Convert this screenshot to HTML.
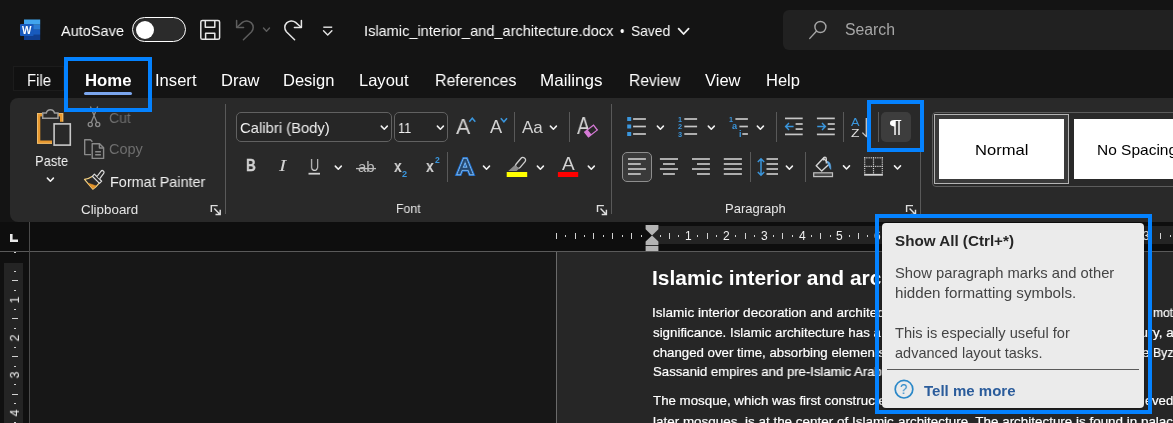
<!DOCTYPE html>
<html lang="en">
<head>
<meta charset="utf-8">
<title>Islamic_interior_and_architecture.docx - Word</title>
<style>
html,body{margin:0;padding:0;background:#141414;}
body{width:1173px;height:423px;overflow:hidden;position:relative;background:#141414;font-family:"Liberation Sans",sans-serif;}
.abs{position:absolute;}
.t{will-change:transform;position:absolute;white-space:pre;line-height:20px;transform-origin:0 50%;font-family:"Liberation Sans",sans-serif;}
#ribbon{left:10px;top:98px;width:1180px;height:124px;background:#292929;border-radius:8px 0 0 8px;}
#rulerband{left:0;top:222px;width:1173px;height:29px;background:#0e0e0e;}
#docbg{left:30px;top:252px;width:1143px;height:171px;background:#171717;}
#leftstrip{left:0;top:252px;width:29px;height:171px;background:#101010;}
#page{left:556px;top:252px;width:617px;height:171px;background:#262626;border-left:1px solid #6a6a6a;box-sizing:border-box;}
.hl{position:absolute;border:4px solid #0482ff;box-sizing:border-box;z-index:7;}
.sep{position:absolute;width:1px;background:#595959;}
.combo{position:absolute;box-sizing:border-box;border:1px solid #616161;border-radius:5px;background:#262626;}
svg{position:absolute;left:0;top:0;overflow:visible;}
</style>
</head>
<body>
<!-- backgrounds -->
<div class="abs" id="searchbox" style="left:783px;top:10px;width:400px;height:40px;background:#212121;border-radius:6px;"></div>
<div class="abs" id="ribbon"></div>
<div class="abs" id="rulerband"></div>
<div class="abs" id="leftstrip"></div>
<div class="abs" id="docbg"></div>
<div class="abs" id="page"></div>
<div class="abs" style="left:0;top:251px;width:1173px;height:1px;background:#5a5a5a;"></div>
<div class="abs" style="left:29px;top:222px;width:1px;height:201px;background:#4a4a4a;"></div>
<!-- ruler light areas -->
<div class="abs" style="left:652px;top:226px;width:521px;height:18px;background:#242424;"></div>
<div class="abs" style="left:4px;top:263px;width:19px;height:160px;background:#242424;"></div>

<div class="abs" style="left:13px;top:66px;width:51px;height:25px;box-sizing:border-box;background:#111111;border:1px solid #1c1c1c;"></div>
<!-- toggle -->
<div class="abs" style="left:132px;top:17px;width:54px;height:25px;box-sizing:border-box;border:1.8px solid #ffffff;border-radius:13px;background:#2b2b2b;"></div>
<div class="abs" style="left:136.3px;top:20.8px;width:18px;height:18px;border-radius:50%;background:#ffffff;"></div>
<!-- home underline -->
<div class="abs" style="left:84px;top:92px;width:48px;height:3px;border-radius:2px;background:#7ba6ee;"></div>

<!-- ribbon controls -->
<div class="sep" style="left:225px;top:104px;height:110px;"></div>
<div class="sep" style="left:611px;top:104px;height:110px;"></div>
<div class="sep" style="left:920px;top:104px;height:110px;"></div>
<div class="combo" style="left:236px;top:112px;width:156px;height:30px;"></div>
<div class="combo" style="left:394px;top:112px;width:54px;height:30px;"></div>
<div class="sep" style="left:514px;top:112px;height:30px;"></div>
<div class="sep" style="left:569px;top:112px;height:30px;"></div>
<div class="sep" style="left:447px;top:152px;height:30px;"></div>
<div class="sep" style="left:776px;top:112px;height:30px;"></div>
<div class="sep" style="left:843px;top:112px;height:30px;"></div>
<div class="sep" style="left:878px;top:112px;height:30px;"></div>
<div class="sep" style="left:750px;top:152px;height:30px;"></div>
<div class="sep" style="left:805px;top:152px;height:30px;"></div>
<div class="abs" style="left:881px;top:112px;width:30px;height:30px;border-radius:5px;background:#3d3d3d;"></div>
<div class="abs" style="left:622px;top:152px;width:30px;height:30px;box-sizing:border-box;border:1px solid #8e8e8e;border-radius:5px;background:#3a3a3a;"></div>
<!-- styles gallery -->
<div class="abs" style="left:932px;top:112px;width:260px;height:75px;box-sizing:border-box;border:1px solid #5c5c5c;border-radius:4px;"></div>
<div class="abs" style="left:934px;top:114px;width:135px;height:69.5px;box-sizing:border-box;border:1px solid #b4b4b4;background:#3a3a3a;"></div>
<div class="abs" style="left:939px;top:119px;width:125px;height:60px;background:#ffffff;"></div>
<div class="abs" style="left:1074px;top:119px;width:125px;height:60px;background:#ffffff;"></div>

<svg width="1173" height="423" viewBox="0 0 1173 423" style="z-index:2;" aria-hidden="true">
<g id="word-logo">
<rect x="24" y="19.5" width="16.2" height="5.2" fill="#41a5ee"/>
<rect x="24" y="24.7" width="16.2" height="5.1" fill="#2b7cd3"/>
<rect x="24" y="29.8" width="16.2" height="5.1" fill="#185abd"/>
<rect x="24" y="34.9" width="16.2" height="5.1" fill="#103f91"/>
<rect x="20" y="24" width="13.6" height="12" rx="1" fill="#185abd"/>
<text x="26.8" y="33.7" font-family="Liberation Sans, sans-serif" font-weight="700" font-size="10" fill="#ffffff" text-anchor="middle">W</text>
</g>
<g id="save" fill="none" stroke="#e6e6e6" stroke-width="1.5" stroke-linejoin="round">
<rect x="200.8" y="20.4" width="18.8" height="18.9" rx="1.6"/>
<path d="M205.3 20.4 V27.2 H214.8 V20.4"/>
<path d="M205.6 39.3 V33.3 H214.8 V39.3"/>
</g>
<g id="undo" fill="none" stroke="#5e5e5e" stroke-width="1.5" stroke-linecap="round" stroke-linejoin="round">
<path d="M236.6 20.5 V27.5 H243.6"/><path d="M237 27.2 L242.4 22.4 A6.6 6.6 0 0 1 251.6 31.8 L243.4 39.8"/>
</g>
<polyline points="263.50,28.00 266.50,31.20 269.50,28.00" fill="none" stroke="#5e5e5e" stroke-width="1.4" stroke-linecap="round" stroke-linejoin="round"/>
<g id="redo" fill="none" stroke="#e6e6e6" stroke-width="1.5" stroke-linecap="round" stroke-linejoin="round">
<path d="M301.4 20.5 V27.5 H294.4"/><path d="M301 27.2 L295.6 22.4 A6.6 6.6 0 0 0 286.4 31.8 L294.6 39.8"/>
</g>
<line x1="323.30" y1="27.20" x2="332.20" y2="27.20" stroke="#e6e6e6" stroke-width="1.4" stroke-linecap="butt"/>
<polyline points="323.50,30.70 327.70,34.90 331.90,30.70" fill="none" stroke="#e6e6e6" stroke-width="1.4" stroke-linecap="round" stroke-linejoin="round"/>
<polyline points="678.60,28.60 683.60,34.00 688.60,28.60" fill="none" stroke="#f0f0f0" stroke-width="1.8" stroke-linecap="round" stroke-linejoin="round"/>
<circle cx="820.4" cy="27" r="5.5" fill="none" stroke="#a6a6a6" stroke-width="1.4"/>
<line x1="816.40" y1="31.20" x2="809.80" y2="38.40" stroke="#a6a6a6" stroke-width="1.4" stroke-linecap="round"/>
<g id="paste">
<rect x="38.7" y="114.8" width="22.9" height="27.3" fill="none" stroke="#e8982e" stroke-width="3.2"/>
<rect x="37.5" y="113.5" width="25.3" height="29.8" fill="none" stroke="#f3c373" stroke-width="0.9"/>
<path d="M42.7 118.2 V113 H46.3 A4.2 4.2 0 0 1 54.5 113 H58 V118.2 Z" fill="#292929" stroke="#9c9c9c" stroke-width="1.5"/>
<rect x="52" y="121.8" width="20.5" height="25.5" fill="#292929"/>
<rect x="54.1" y="123.9" width="16.2" height="21.2" fill="#292929" stroke="#c8c8c8" stroke-width="1.6"/>
</g>
<polyline points="47.40,178.15 50.40,181.25 53.40,178.15" fill="none" stroke="#f0f0f0" stroke-width="1.55" stroke-linecap="round" stroke-linejoin="round"/>
<g id="cut" fill="none" stroke="#8a8a8a" stroke-width="1.3">
<path d="M90.4 106.6 L96.9 122.4 M97.7 106.6 L91.2 122.4"/><circle cx="90.3" cy="124.5" r="2.1"/><circle cx="97.7" cy="124.5" r="2.1"/>
</g>
<g id="copy" fill="none" stroke="#8a8a8a" stroke-width="1.4" stroke-linejoin="round">
<path d="M91 154.6 H84.7 V139.8 H90.5 L92.4 141.7"/>
<path d="M92.2 143.8 H99.6 L103.6 147.8 V158.4 H92.2 Z"/><path d="M99.4 144 V148 H103.4"/>
<path d="M95.2 151.8 H100.9 M95.2 154.7 H100.9"/>
</g>
<g id="fpainter" fill="none" stroke-linejoin="round">
<path d="M92.6 176.2 Q88.6 178.8 84.5 179.4 L92.8 189.2 Q96.8 186.6 99.2 183.2" stroke="#f3cf80" stroke-width="1.2"/>
<path d="M88.3 183.3 Q92 184.4 96 185.9 L92.9 188.5 Z" fill="#e8962a" stroke="#e8962a" stroke-width="0.6"/>
<path d="M94.4 174.1 L101.7 181.2 L99.5 183.4 L92.3 176.3 Z" fill="#292929" stroke="#dcdcdc" stroke-width="1.2"/>
<path d="M97 176.5 L100.9 171.3 A1.75 1.75 0 0 1 103.7 173.4 L99.6 178.9" fill="#292929" stroke="#dcdcdc" stroke-width="1.2"/>
</g>
<path d="M211.30 212.00 V205.60 H217.70 M214.30 208.60 L220.10 214.40 M220.20 209.80 V214.50 H215.50" fill="none" stroke="#dedede" stroke-width="1.45"/>
<path d="M597.50 212.00 V205.60 H603.90 M600.50 208.60 L606.30 214.40 M606.40 209.80 V214.50 H601.70" fill="none" stroke="#dedede" stroke-width="1.45"/>
<path d="M906.60 212.00 V205.60 H913.00 M909.60 208.60 L915.40 214.40 M915.50 209.80 V214.50 H910.80" fill="none" stroke="#dedede" stroke-width="1.45"/>
<polyline points="381.30,126.15 384.30,129.25 387.30,126.15" fill="none" stroke="#f0f0f0" stroke-width="1.55" stroke-linecap="round" stroke-linejoin="round"/>
<polyline points="437.40,126.15 440.40,129.25 443.40,126.15" fill="none" stroke="#f0f0f0" stroke-width="1.55" stroke-linecap="round" stroke-linejoin="round"/>
<polyline points="469.3,121.8 472.3,118.2 475.3,121.8" fill="none" stroke="#3a96dd" stroke-width="1.5"/>
<polyline points="500.8,118.2 503.9,121.8 507,118.2" fill="none" stroke="#3a96dd" stroke-width="1.5"/>
<polyline points="550.40,126.15 553.40,129.25 556.40,126.15" fill="none" stroke="#f0f0f0" stroke-width="1.55" stroke-linecap="round" stroke-linejoin="round"/>
<g transform="translate(591,131) rotate(-38)"><rect x="-5.6" y="-3.1" width="11.2" height="6.2" fill="#292929" stroke="#d67ad6" stroke-width="1.3"/><rect x="-5.6" y="-3.1" width="3.8" height="6.2" fill="#d67ad6"/></g>
<rect x="308.5" y="172.8" width="11.5" height="1.8" fill="#d0d0d0"/>
<polyline points="335.30,166.15 338.30,169.25 341.30,166.15" fill="none" stroke="#f0f0f0" stroke-width="1.55" stroke-linecap="round" stroke-linejoin="round"/>
<line x1="356.00" y1="168.60" x2="376.00" y2="168.60" stroke="#bcbcbc" stroke-width="1.3" stroke-linecap="butt"/>
<g id="texteffects" font-family="Liberation Sans, sans-serif" font-size="22" text-anchor="middle" stroke-linejoin="miter" stroke-miterlimit="3">
<text x="465" y="174" fill="#1b67c3" stroke="#1b67c3" stroke-width="4.2">A</text>
<text x="465" y="174" fill="#7db9f1" stroke="#7db9f1" stroke-width="2.3">A</text>
<text x="465" y="174" fill="#24476e" stroke="#24476e" stroke-width="0.5">A</text>
</g>
<polyline points="483.50,166.15 486.50,169.25 489.50,166.15" fill="none" stroke="#f0f0f0" stroke-width="1.55" stroke-linecap="round" stroke-linejoin="round"/>
<g id="highlighter">
<g transform="translate(520.6,162.8) rotate(-50)"><rect x="-6.2" y="-2.6" width="12.4" height="5.2" rx="2.4" fill="none" stroke="#d0d0d0" stroke-width="1.3"/></g>
<path d="M514.9 164.9 L519.2 168.5 L516.6 170.9 L508.3 170.9 Z" fill="#8c8c8c"/>
</g>
<rect x="506.7" y="172" width="20.5" height="5" fill="#ffff00"/>
<polyline points="537.40,166.15 540.40,169.25 543.40,166.15" fill="none" stroke="#f0f0f0" stroke-width="1.55" stroke-linecap="round" stroke-linejoin="round"/>
<rect x="557.9" y="172" width="20.3" height="5" fill="#ff0000"/>
<polyline points="588.30,166.15 591.30,169.25 594.30,166.15" fill="none" stroke="#f0f0f0" stroke-width="1.55" stroke-linecap="round" stroke-linejoin="round"/>
<rect x="627.2" y="117.0" width="4" height="4" fill="#3a96dd"/>
<line x1="633.10" y1="119.00" x2="645.90" y2="119.00" stroke="#c6c6c6" stroke-width="1.7" stroke-linecap="butt"/>
<line x1="684.30" y1="119.00" x2="697.10" y2="119.00" stroke="#c6c6c6" stroke-width="1.7" stroke-linecap="butt"/>
<rect x="627.2" y="124.5" width="4" height="4" fill="#3a96dd"/>
<line x1="633.10" y1="126.50" x2="645.90" y2="126.50" stroke="#c6c6c6" stroke-width="1.7" stroke-linecap="butt"/>
<line x1="684.30" y1="126.50" x2="697.10" y2="126.50" stroke="#c6c6c6" stroke-width="1.7" stroke-linecap="butt"/>
<rect x="627.2" y="132.0" width="4" height="4" fill="#3a96dd"/>
<line x1="633.10" y1="134.00" x2="645.90" y2="134.00" stroke="#c6c6c6" stroke-width="1.7" stroke-linecap="butt"/>
<line x1="684.30" y1="134.00" x2="697.10" y2="134.00" stroke="#c6c6c6" stroke-width="1.7" stroke-linecap="butt"/>
<polyline points="657.40,126.15 660.40,129.25 663.40,126.15" fill="none" stroke="#f0f0f0" stroke-width="1.55" stroke-linecap="round" stroke-linejoin="round"/>
<polyline points="708.30,126.15 711.30,129.25 714.30,126.15" fill="none" stroke="#f0f0f0" stroke-width="1.55" stroke-linecap="round" stroke-linejoin="round"/>
<line x1="735.40" y1="119.00" x2="747.90" y2="119.00" stroke="#c6c6c6" stroke-width="1.7" stroke-linecap="butt"/>
<line x1="739.40" y1="126.50" x2="747.90" y2="126.50" stroke="#c6c6c6" stroke-width="1.7" stroke-linecap="butt"/>
<line x1="742.30" y1="134.00" x2="747.90" y2="134.00" stroke="#c6c6c6" stroke-width="1.7" stroke-linecap="butt"/>
<polyline points="757.40,126.15 760.40,129.25 763.40,126.15" fill="none" stroke="#f0f0f0" stroke-width="1.55" stroke-linecap="round" stroke-linejoin="round"/>
<line x1="785.00" y1="118.40" x2="802.70" y2="118.40" stroke="#c6c6c6" stroke-width="1.7" stroke-linecap="butt"/>
<line x1="795.60" y1="124.00" x2="802.70" y2="124.00" stroke="#c6c6c6" stroke-width="1.7" stroke-linecap="butt"/>
<line x1="795.60" y1="129.10" x2="802.70" y2="129.10" stroke="#c6c6c6" stroke-width="1.7" stroke-linecap="butt"/>
<line x1="785.00" y1="134.40" x2="802.70" y2="134.40" stroke="#c6c6c6" stroke-width="1.7" stroke-linecap="butt"/>
<line x1="816.90" y1="118.40" x2="834.80" y2="118.40" stroke="#c6c6c6" stroke-width="1.7" stroke-linecap="butt"/>
<line x1="827.70" y1="124.00" x2="834.80" y2="124.00" stroke="#c6c6c6" stroke-width="1.7" stroke-linecap="butt"/>
<line x1="827.70" y1="129.10" x2="834.80" y2="129.10" stroke="#c6c6c6" stroke-width="1.7" stroke-linecap="butt"/>
<line x1="816.90" y1="134.40" x2="834.80" y2="134.40" stroke="#c6c6c6" stroke-width="1.7" stroke-linecap="butt"/>
<path d="M793.6 126.5 H785.6 M789 123.1 L785.6 126.5 L789 129.9" fill="none" stroke="#3a96dd" stroke-width="1.4"/>
<path d="M817.2 126.5 H825.4 M822 123.1 L825.4 126.5 L822 129.9" fill="none" stroke="#3a96dd" stroke-width="1.4"/>
<path d="M866.3 118 V136.6 M862.4 132.6 L866.3 136.6 L870.2 132.6" fill="none" stroke="#c6c6c6" stroke-width="1.3"/>
<line x1="628.00" y1="159.00" x2="645.90" y2="159.00" stroke="#c6c6c6" stroke-width="1.7" stroke-linecap="butt"/>
<line x1="659.90" y1="159.00" x2="678.00" y2="159.00" stroke="#c6c6c6" stroke-width="1.7" stroke-linecap="butt"/>
<line x1="692.00" y1="159.00" x2="709.90" y2="159.00" stroke="#c6c6c6" stroke-width="1.7" stroke-linecap="butt"/>
<line x1="723.80" y1="159.00" x2="741.90" y2="159.00" stroke="#c6c6c6" stroke-width="1.7" stroke-linecap="butt"/>
<line x1="766.50" y1="159.00" x2="778.00" y2="159.00" stroke="#c6c6c6" stroke-width="1.7" stroke-linecap="butt"/>
<line x1="628.00" y1="164.00" x2="640.80" y2="164.00" stroke="#c6c6c6" stroke-width="1.7" stroke-linecap="butt"/>
<line x1="663.00" y1="164.00" x2="674.90" y2="164.00" stroke="#c6c6c6" stroke-width="1.7" stroke-linecap="butt"/>
<line x1="697.00" y1="164.00" x2="709.90" y2="164.00" stroke="#c6c6c6" stroke-width="1.7" stroke-linecap="butt"/>
<line x1="723.80" y1="164.00" x2="741.90" y2="164.00" stroke="#c6c6c6" stroke-width="1.7" stroke-linecap="butt"/>
<line x1="766.50" y1="164.00" x2="778.00" y2="164.00" stroke="#c6c6c6" stroke-width="1.7" stroke-linecap="butt"/>
<line x1="628.00" y1="169.00" x2="645.90" y2="169.00" stroke="#c6c6c6" stroke-width="1.7" stroke-linecap="butt"/>
<line x1="659.90" y1="169.00" x2="678.00" y2="169.00" stroke="#c6c6c6" stroke-width="1.7" stroke-linecap="butt"/>
<line x1="692.00" y1="169.00" x2="709.90" y2="169.00" stroke="#c6c6c6" stroke-width="1.7" stroke-linecap="butt"/>
<line x1="723.80" y1="169.00" x2="741.90" y2="169.00" stroke="#c6c6c6" stroke-width="1.7" stroke-linecap="butt"/>
<line x1="766.50" y1="169.00" x2="778.00" y2="169.00" stroke="#c6c6c6" stroke-width="1.7" stroke-linecap="butt"/>
<line x1="628.00" y1="174.00" x2="640.80" y2="174.00" stroke="#c6c6c6" stroke-width="1.7" stroke-linecap="butt"/>
<line x1="663.00" y1="174.00" x2="674.90" y2="174.00" stroke="#c6c6c6" stroke-width="1.7" stroke-linecap="butt"/>
<line x1="697.00" y1="174.00" x2="709.90" y2="174.00" stroke="#c6c6c6" stroke-width="1.7" stroke-linecap="butt"/>
<line x1="723.80" y1="174.00" x2="741.90" y2="174.00" stroke="#c6c6c6" stroke-width="1.7" stroke-linecap="butt"/>
<line x1="766.50" y1="174.00" x2="778.00" y2="174.00" stroke="#c6c6c6" stroke-width="1.7" stroke-linecap="butt"/>
<path d="M761 158.8 V175.2 M757.8 162 L761 158.8 L764.2 162 M757.8 172 L761 175.2 L764.2 172" fill="none" stroke="#3a96dd" stroke-width="1.5"/>
<polyline points="786.40,166.15 789.40,169.25 792.40,166.15" fill="none" stroke="#f0f0f0" stroke-width="1.55" stroke-linecap="round" stroke-linejoin="round"/>
<g id="shading">
<path d="M816.2 165.8 L823.3 158.2 L829.3 164.1 L821.7 170.9 Z" fill="none" stroke="#d4d4d4" stroke-width="1.4" stroke-linejoin="round"/>
<path d="M823.4 160.6 V158.7 A1.45 1.45 0 0 1 826.3 158.7 V163.6" fill="none" stroke="#d4d4d4" stroke-width="1.3"/>
<path d="M827.2 161.4 C829.8 161.6 831 164 830.8 169.4 C829.2 168 828.6 164.4 827.2 161.4 Z" fill="#5aa8e8" stroke="#5aa8e8" stroke-width="0.6"/>
<rect x="813.7" y="172.8" width="18.8" height="3.8" fill="#4a4a4a" stroke="#c0c0c0" stroke-width="1.2"/>
</g>
<polyline points="843.50,165.85 846.50,168.95 849.50,165.85" fill="none" stroke="#f0f0f0" stroke-width="1.55" stroke-linecap="round" stroke-linejoin="round"/>
<g id="borders" fill="#d2d2d2">
<rect x="864.10" y="157.20" width="1.2" height="1.2"/>
<rect x="864.10" y="165.80" width="1.2" height="1.2"/>
<rect x="866.30" y="157.20" width="1.2" height="1.2"/>
<rect x="866.30" y="165.80" width="1.2" height="1.2"/>
<rect x="868.50" y="157.20" width="1.2" height="1.2"/>
<rect x="868.50" y="165.80" width="1.2" height="1.2"/>
<rect x="870.70" y="157.20" width="1.2" height="1.2"/>
<rect x="870.70" y="165.80" width="1.2" height="1.2"/>
<rect x="872.90" y="157.20" width="1.2" height="1.2"/>
<rect x="872.90" y="165.80" width="1.2" height="1.2"/>
<rect x="875.10" y="157.20" width="1.2" height="1.2"/>
<rect x="875.10" y="165.80" width="1.2" height="1.2"/>
<rect x="877.30" y="157.20" width="1.2" height="1.2"/>
<rect x="877.30" y="165.80" width="1.2" height="1.2"/>
<rect x="879.50" y="157.20" width="1.2" height="1.2"/>
<rect x="879.50" y="165.80" width="1.2" height="1.2"/>
<rect x="881.70" y="157.20" width="1.2" height="1.2"/>
<rect x="881.70" y="165.80" width="1.2" height="1.2"/>
<rect x="864.10" y="157.20" width="1.2" height="1.2"/>
<rect x="872.90" y="157.20" width="1.2" height="1.2"/>
<rect x="881.70" y="157.20" width="1.2" height="1.2"/>
<rect x="864.10" y="159.35" width="1.2" height="1.2"/>
<rect x="872.90" y="159.35" width="1.2" height="1.2"/>
<rect x="881.70" y="159.35" width="1.2" height="1.2"/>
<rect x="864.10" y="161.50" width="1.2" height="1.2"/>
<rect x="872.90" y="161.50" width="1.2" height="1.2"/>
<rect x="881.70" y="161.50" width="1.2" height="1.2"/>
<rect x="864.10" y="163.65" width="1.2" height="1.2"/>
<rect x="872.90" y="163.65" width="1.2" height="1.2"/>
<rect x="881.70" y="163.65" width="1.2" height="1.2"/>
<rect x="864.10" y="165.80" width="1.2" height="1.2"/>
<rect x="872.90" y="165.80" width="1.2" height="1.2"/>
<rect x="881.70" y="165.80" width="1.2" height="1.2"/>
<rect x="864.10" y="167.95" width="1.2" height="1.2"/>
<rect x="872.90" y="167.95" width="1.2" height="1.2"/>
<rect x="881.70" y="167.95" width="1.2" height="1.2"/>
<rect x="864.10" y="170.10" width="1.2" height="1.2"/>
<rect x="872.90" y="170.10" width="1.2" height="1.2"/>
<rect x="881.70" y="170.10" width="1.2" height="1.2"/>
<rect x="864.10" y="172.25" width="1.2" height="1.2"/>
<rect x="872.90" y="172.25" width="1.2" height="1.2"/>
<rect x="881.70" y="172.25" width="1.2" height="1.2"/>
<rect x="864.1" y="173.9" width="18.8" height="1.8"/>
</g>
<polyline points="894.50,165.85 897.50,168.95 900.50,165.85" fill="none" stroke="#f0f0f0" stroke-width="1.55" stroke-linecap="round" stroke-linejoin="round"/>
<rect x="641" y="235" width="1" height="2" fill="#d2d2d2"/>
<rect x="631" y="233" width="1" height="6" fill="#d2d2d2"/>
<rect x="622" y="235" width="1" height="2" fill="#d2d2d2"/>
<rect x="612" y="233" width="1" height="6" fill="#d2d2d2"/>
<rect x="603" y="235" width="1" height="2" fill="#d2d2d2"/>
<rect x="593" y="233" width="1" height="6" fill="#d2d2d2"/>
<rect x="584" y="235" width="1" height="2" fill="#d2d2d2"/>
<rect x="575" y="233" width="1" height="6" fill="#d2d2d2"/>
<rect x="565" y="235" width="1" height="2" fill="#d2d2d2"/>
<rect x="556" y="233" width="1" height="6" fill="#d2d2d2"/>
<rect x="660" y="235" width="1" height="2" fill="#d2d2d2"/>
<rect x="669" y="233" width="1" height="6" fill="#d2d2d2"/>
<rect x="678" y="235" width="1" height="2" fill="#d2d2d2"/>
<rect x="697" y="235" width="1" height="2" fill="#d2d2d2"/>
<rect x="707" y="233" width="1" height="6" fill="#d2d2d2"/>
<rect x="716" y="235" width="1" height="2" fill="#d2d2d2"/>
<rect x="735" y="235" width="1" height="2" fill="#d2d2d2"/>
<rect x="745" y="233" width="1" height="6" fill="#d2d2d2"/>
<rect x="754" y="235" width="1" height="2" fill="#d2d2d2"/>
<rect x="773" y="235" width="1" height="2" fill="#d2d2d2"/>
<rect x="782" y="233" width="1" height="6" fill="#d2d2d2"/>
<rect x="792" y="235" width="1" height="2" fill="#d2d2d2"/>
<rect x="811" y="235" width="1" height="2" fill="#d2d2d2"/>
<rect x="820" y="233" width="1" height="6" fill="#d2d2d2"/>
<rect x="830" y="235" width="1" height="2" fill="#d2d2d2"/>
<rect x="849" y="235" width="1" height="2" fill="#d2d2d2"/>
<rect x="858" y="233" width="1" height="6" fill="#d2d2d2"/>
<rect x="867" y="235" width="1" height="2" fill="#d2d2d2"/>
<rect x="886" y="235" width="1" height="2" fill="#d2d2d2"/>
<rect x="896" y="233" width="1" height="6" fill="#d2d2d2"/>
<rect x="905" y="235" width="1" height="2" fill="#d2d2d2"/>
<rect x="924" y="235" width="1" height="2" fill="#d2d2d2"/>
<rect x="934" y="233" width="1" height="6" fill="#d2d2d2"/>
<rect x="943" y="235" width="1" height="2" fill="#d2d2d2"/>
<rect x="962" y="235" width="1" height="2" fill="#d2d2d2"/>
<rect x="971" y="233" width="1" height="6" fill="#d2d2d2"/>
<rect x="981" y="235" width="1" height="2" fill="#d2d2d2"/>
<rect x="1000" y="235" width="1" height="2" fill="#d2d2d2"/>
<rect x="1009" y="233" width="1" height="6" fill="#d2d2d2"/>
<rect x="1019" y="235" width="1" height="2" fill="#d2d2d2"/>
<rect x="1038" y="235" width="1" height="2" fill="#d2d2d2"/>
<rect x="1047" y="233" width="1" height="6" fill="#d2d2d2"/>
<rect x="1056" y="235" width="1" height="2" fill="#d2d2d2"/>
<rect x="1075" y="235" width="1" height="2" fill="#d2d2d2"/>
<rect x="1085" y="233" width="1" height="6" fill="#d2d2d2"/>
<rect x="1094" y="235" width="1" height="2" fill="#d2d2d2"/>
<rect x="1113" y="235" width="1" height="2" fill="#d2d2d2"/>
<rect x="1123" y="233" width="1" height="6" fill="#d2d2d2"/>
<rect x="1132" y="235" width="1" height="2" fill="#d2d2d2"/>
<rect x="1151" y="235" width="1" height="2" fill="#d2d2d2"/>
<rect x="1160" y="233" width="1" height="6" fill="#d2d2d2"/>
<rect x="1170" y="235" width="1" height="2" fill="#d2d2d2"/>
<g id="indent" fill="#b4b4b4">
<path d="M645.6 225 H658.4 V229.2 L652 235.4 L645.6 229.2 Z"/>
<path d="M645.6 245 V241.6 L652 235.6 L658.4 241.6 V245 Z"/>
<rect x="645.6" y="245.8" width="12.8" height="5.2"/>
</g>
<path d="M10 234 H12.6 V239.4 H18 V242 H10 Z" fill="#e8e8e8"/>
<rect x="14" y="252" width="2" height="1" fill="#d2d2d2"/>
<rect x="14" y="271" width="2" height="1" fill="#d2d2d2"/>
<rect x="12" y="280" width="6" height="1" fill="#d2d2d2"/>
<rect x="14" y="290" width="2" height="1" fill="#d2d2d2"/>
<rect x="14" y="309" width="2" height="1" fill="#d2d2d2"/>
<rect x="12" y="318" width="6" height="1" fill="#d2d2d2"/>
<rect x="14" y="328" width="2" height="1" fill="#d2d2d2"/>
<rect x="14" y="347" width="2" height="1" fill="#d2d2d2"/>
<rect x="12" y="356" width="6" height="1" fill="#d2d2d2"/>
<rect x="14" y="366" width="2" height="1" fill="#d2d2d2"/>
<rect x="14" y="384" width="2" height="1" fill="#d2d2d2"/>
<rect x="12" y="394" width="6" height="1" fill="#d2d2d2"/>
<rect x="14" y="403" width="2" height="1" fill="#d2d2d2"/>
<rect x="14" y="422" width="2" height="1" fill="#d2d2d2"/>
</svg>

<!-- highlight boxes -->
<div class="hl" style="left:64px;top:57px;width:88px;height:55px;"></div>
<div class="hl" style="left:867px;top:100px;width:57px;height:52px;"></div>
<div class="hl" style="left:875px;top:214px;width:277px;height:200px;"></div>
<!-- tooltip -->
<div class="abs" id="tooltip" style="left:882px;top:223px;width:262px;height:184.5px;background:#ebebeb;border-radius:4px;box-shadow:0 1px 4px rgba(0,0,0,.5);z-index:5;"></div>
<div class="abs" style="left:887px;top:369px;width:252px;height:1px;background:#5a5a5a;z-index:6;"></div>
<svg width="1173" height="423" style="z-index:6;" aria-hidden="true">
 <circle cx="904" cy="389.2" r="8.8" fill="none" stroke="#2b88c8" stroke-width="1.7"/>
</svg>

<span class="t" style="left:61.00px;top:20.60px;font-size:15px;color:#ffffff;transform:scaleX(0.9685);">AutoSave</span>
<span class="t" style="left:363.60px;top:20.60px;font-size:15px;color:#ffffff;transform:scaleX(0.9712);">Islamic_interior_and_architecture.docx</span>
<span class="t" style="left:619.60px;top:20.60px;font-size:15px;color:#ffffff;transform:scaleX(0.8356);">•</span>
<span class="t" style="left:631.20px;top:20.60px;font-size:15px;color:#ffffff;transform:scaleX(0.9213);">Saved</span>
<span class="t" style="left:844.50px;top:20.33px;font-size:15.8px;color:#a6a6a6;transform:scaleX(0.9988);">Search</span>
<span class="t" style="left:27.00px;top:70.08px;font-size:16.5px;color:#ffffff;transform:scaleX(0.9025);">File</span>
<span class="t" style="left:84.50px;top:70.08px;font-size:16.5px;color:#ffffff;transform:scaleX(1.0143);font-weight:700;">Home</span>
<span class="t" style="left:154.50px;top:70.08px;font-size:16.5px;color:#ffffff;transform:scaleX(1.0053);">Insert</span>
<span class="t" style="left:220.70px;top:70.08px;font-size:16.5px;color:#ffffff;transform:scaleX(0.9944);">Draw</span>
<span class="t" style="left:283.40px;top:70.08px;font-size:16.5px;color:#ffffff;transform:scaleX(0.9927);">Design</span>
<span class="t" style="left:358.50px;top:70.08px;font-size:16.5px;color:#ffffff;transform:scaleX(1.0011);">Layout</span>
<span class="t" style="left:434.60px;top:70.08px;font-size:16.5px;color:#ffffff;transform:scaleX(0.9634);">References</span>
<span class="t" style="left:540.30px;top:70.08px;font-size:16.5px;color:#ffffff;transform:scaleX(1.0309);">Mailings</span>
<span class="t" style="left:628.90px;top:70.08px;font-size:16.5px;color:#ffffff;transform:scaleX(0.9462);">Review</span>
<span class="t" style="left:705.30px;top:70.08px;font-size:16.5px;color:#ffffff;transform:scaleX(1.0009);">View</span>
<span class="t" style="left:765.50px;top:70.08px;font-size:16.5px;color:#ffffff;transform:scaleX(0.9871);">Help</span>
<span class="t" style="left:34.50px;top:150.88px;font-size:14.5px;color:#f0f0f0;transform:scaleX(0.8950);">Paste</span>
<span class="t" style="left:109.00px;top:107.68px;font-size:14.5px;color:#6e6e6e;transform:scaleX(0.9655);">Cut</span>
<span class="t" style="left:109.00px;top:139.48px;font-size:14.5px;color:#6e6e6e;transform:scaleX(0.9923);">Copy</span>
<span class="t" style="left:109.70px;top:171.68px;font-size:14.5px;color:#f0f0f0;transform:scaleX(0.9937);">Format Painter</span>
<span class="t" style="left:81.30px;top:199.50px;font-size:13px;color:#e6e6e6;transform:scaleX(1.0277);">Clipboard</span>
<span class="t" style="left:239.50px;top:117.50px;font-size:15px;color:#f0f0f0;transform:scaleX(0.9883);">Calibri (Body)</span>
<span class="t" style="left:398.30px;top:117.50px;font-size:15px;color:#f0f0f0;transform:scaleX(0.8473);">11</span>
<span class="t" style="left:396.40px;top:199.30px;font-size:13px;color:#e6e6e6;transform:scaleX(0.9417);">Font</span>
<span class="t" style="left:725.20px;top:199.30px;font-size:13px;color:#e6e6e6;transform:scaleX(0.9980);">Paragraph</span>
<span class="t" style="left:974.90px;top:139.70px;font-size:15px;color:#000000;transform:scaleX(1.1046);">Normal</span>
<span class="t" style="left:1096.90px;top:139.70px;font-size:15px;color:#000000;transform:scaleX(1.0327);">No Spacing</span>
<span class="t" style="left:652.20px;top:267.57px;font-size:20px;color:#ffffff;transform:scaleX(1.0473);font-weight:700;z-index:1;">Islamic interior and architecture</span>
<span class="t" style="left:652.20px;top:303.23px;font-size:13.2px;color:#ffffff;transform:scaleX(1.0275);z-index:1;-webkit-text-stroke:0.2px #ffffff;">Islamic interior decoration and architecture</span>
<span class="t" style="left:652.80px;top:323.03px;font-size:13.2px;color:#ffffff;transform:scaleX(1.0095);z-index:1;-webkit-text-stroke:0.2px #ffffff;">significance. Islamic architecture has a</span>
<span class="t" style="left:652.80px;top:342.53px;font-size:13.2px;color:#ffffff;transform:scaleX(1.0057);z-index:1;-webkit-text-stroke:0.2px #ffffff;">changed over time, absorbing elements</span>
<span class="t" style="left:652.80px;top:361.83px;font-size:13.2px;color:#ffffff;transform:scaleX(0.9977);z-index:1;-webkit-text-stroke:0.2px #ffffff;">Sassanid empires and pre-Islamic Arabia.</span>
<span class="t" style="left:652.80px;top:391.43px;font-size:13.2px;color:#ffffff;transform:scaleX(1.0087);z-index:1;-webkit-text-stroke:0.2px #ffffff;">The mosque, which was first constructed</span>
<span class="t" style="left:652.80px;top:411.63px;font-size:13.2px;color:#ffffff;transform:scaleX(1.0203);z-index:1;-webkit-text-stroke:0.2px #ffffff;">later mosques, is at the center of Islamic</span>
<span class="t" style="left:898.00px;top:411.63px;font-size:13.2px;color:#ffffff;transform:scaleX(1.0176);z-index:1;-webkit-text-stroke:0.2px #ffffff;">architecture. The architecture is found in palaces</span>
<span class="t" style="left:1153.20px;top:303.23px;font-size:13.2px;color:#ffffff;transform:scaleX(0.9143);z-index:1;-webkit-text-stroke:0.2px #ffffff;">mot</span>
<span class="t" style="left:1139.80px;top:323.03px;font-size:13.2px;color:#ffffff;transform:scaleX(1.0908);z-index:1;-webkit-text-stroke:0.2px #ffffff;">ur</span>
<span class="t" style="left:1152.60px;top:323.03px;font-size:13.2px;color:#ffffff;transform:scaleX(1.0157);z-index:1;-webkit-text-stroke:0.2px #ffffff;">y, a</span>
<span class="t" style="left:1142.00px;top:342.53px;font-size:13.2px;color:#ffffff;transform:scaleX(0.9940);z-index:1;-webkit-text-stroke:0.2px #ffffff;">e</span>
<span class="t" style="left:1152.80px;top:342.53px;font-size:13.2px;color:#ffffff;transform:scaleX(0.9279);z-index:1;-webkit-text-stroke:0.2px #ffffff;">Byz</span>
<span class="t" style="left:1144.70px;top:391.43px;font-size:13.2px;color:#ffffff;transform:scaleX(0.9940);z-index:1;-webkit-text-stroke:0.2px #ffffff;">e</span>
<span class="t" style="left:1152.20px;top:391.43px;font-size:13.2px;color:#ffffff;transform:scaleX(0.9969);z-index:1;-webkit-text-stroke:0.2px #ffffff;">ved</span>
<span class="t" style="left:895.20px;top:231.00px;font-size:15px;color:#262626;transform:scaleX(1.0138);font-weight:700;z-index:6;">Show All (Ctrl+*)</span>
<span class="t" style="left:895.20px;top:262.75px;font-size:14.3px;color:#444444;transform:scaleX(1.0334);z-index:6;">Show paragraph marks and other</span>
<span class="t" style="left:895.20px;top:283.25px;font-size:14.3px;color:#444444;transform:scaleX(1.0605);z-index:6;">hidden formatting symbols.</span>
<span class="t" style="left:895.10px;top:322.95px;font-size:14.3px;color:#444444;transform:scaleX(1.0237);z-index:6;">This is especially useful for</span>
<span class="t" style="left:895.10px;top:343.05px;font-size:14.3px;color:#444444;transform:scaleX(1.0148);z-index:6;">advanced layout tasks.</span>
<span class="t" style="left:923.60px;top:380.80px;font-size:15px;color:#2b5c9b;transform:scaleX(1.0009);font-weight:700;z-index:6;">Tell me more</span>
<span class="t" style="left:456.00px;top:115.77px;font-size:22.9px;color:#d2d2d2;transform:scaleX(0.9358);z-index:3;">A</span>
<span class="t" style="left:490.00px;top:117.39px;font-size:18.2px;color:#d2d2d2;transform:scaleX(0.9637);z-index:3;">A</span>
<span class="t" style="left:522.30px;top:117.81px;font-size:17px;color:#d2d2d2;transform:scaleX(0.9857);z-index:3;">Aa</span>
<span class="t" style="left:576.80px;top:115.56px;font-size:23.5px;color:#d2d2d2;transform:scaleX(0.8414);z-index:1;">A</span>
<span class="t" style="left:246.30px;top:155.75px;font-size:16.6px;color:#d2d2d2;transform:scaleX(0.8094);font-weight:700;z-index:3;-webkit-text-stroke:0.4px #d2d2d2;">B</span>
<span class="t" style="left:279.20px;top:155.76px;font-size:17px;color:#d2d2d2;transform:scaleX(1.2694);font-family:'Liberation Serif', serif;z-index:3;font-style:italic;">I</span>
<span class="t" style="left:309.70px;top:155.75px;font-size:16.6px;color:#d2d2d2;transform:scaleX(0.7593);z-index:3;">U</span>
<span class="t" style="left:357.60px;top:157.00px;font-size:15px;color:#bcbcbc;transform:scaleX(0.9948);z-index:1;">ab</span>
<span class="t" style="left:393.80px;top:155.82px;font-size:16.4px;color:#d2d2d2;transform:scaleX(0.8438);font-weight:700;z-index:3;">x</span>
<span class="t" style="left:402.30px;top:163.72px;font-size:8.6px;color:#3a96dd;transform:scaleX(1.0667);font-weight:700;z-index:3;">2</span>
<span class="t" style="left:425.60px;top:155.82px;font-size:16.4px;color:#d2d2d2;transform:scaleX(0.8548);font-weight:700;z-index:3;">x</span>
<span class="t" style="left:434.60px;top:150.02px;font-size:8.6px;color:#3a96dd;transform:scaleX(1.0039);font-weight:700;z-index:3;">2</span>
<span class="t" style="left:562.00px;top:154.12px;font-size:19px;color:#d2d2d2;transform:scaleX(0.9773);z-index:3;">A</span>
<span class="t" style="left:677.60px;top:109.61px;font-size:7.2px;color:#3a96dd;transform:scaleX(0.9750);font-weight:700;z-index:3;">1</span>
<span class="t" style="left:677.60px;top:117.11px;font-size:7.2px;color:#3a96dd;transform:scaleX(1.0250);font-weight:700;z-index:3;">2</span>
<span class="t" style="left:677.60px;top:124.61px;font-size:7.2px;color:#3a96dd;transform:scaleX(1.0250);font-weight:700;z-index:3;">3</span>
<span class="t" style="left:728.90px;top:109.61px;font-size:7.2px;color:#3a96dd;transform:scaleX(0.9750);font-weight:700;z-index:3;">1</span>
<span class="t" style="left:732.00px;top:116.41px;font-size:9.2px;color:#3a96dd;transform:scaleX(0.9951);font-weight:700;z-index:3;">a</span>
<span class="t" style="left:738.80px;top:123.98px;font-size:9px;color:#3a96dd;transform:scaleX(0.8745);font-weight:700;z-index:3;">i</span>
<span class="t" style="left:851.00px;top:111.96px;font-size:10.8px;color:#3a96dd;transform:scaleX(1.1800);z-index:3;">A</span>
<span class="t" style="left:851.00px;top:123.06px;font-size:10.8px;color:#e0e0e0;transform:scaleX(1.2861);z-index:3;">Z</span>
<span class="t" style="left:889.40px;top:116.59px;font-size:18.8px;color:#ffffff;transform:scaleX(1.3176);z-index:3;">¶</span>
<span class="t" style="left:900.30px;top:379.40px;font-size:15px;color:#2b88c8;transform:scaleX(0.8869);z-index:6;">?</span>
<span class="t" style="left:685.10px;top:225.94px;font-size:12px;color:#f0f0f0;transform:scaleX(0.9869);z-index:1;">1</span>
<span class="t" style="left:722.90px;top:225.94px;font-size:12px;color:#f0f0f0;transform:scaleX(0.9869);z-index:1;">2</span>
<span class="t" style="left:760.70px;top:225.94px;font-size:12px;color:#f0f0f0;transform:scaleX(0.9869);z-index:1;">3</span>
<span class="t" style="left:798.50px;top:225.94px;font-size:12px;color:#f0f0f0;transform:scaleX(0.9869);z-index:1;">4</span>
<span class="t" style="left:836.30px;top:225.94px;font-size:12px;color:#f0f0f0;transform:scaleX(0.9869);z-index:1;">5</span>
<span class="t" style="left:874.10px;top:225.94px;font-size:12px;color:#f0f0f0;transform:scaleX(0.9869);z-index:1;">6</span>
<span class="t" style="left:911.90px;top:225.94px;font-size:12px;color:#f0f0f0;transform:scaleX(0.9869);z-index:1;">7</span>
<span class="t" style="left:949.70px;top:225.94px;font-size:12px;color:#f0f0f0;transform:scaleX(0.9869);z-index:1;">8</span>
<span class="t" style="left:987.50px;top:225.94px;font-size:12px;color:#f0f0f0;transform:scaleX(0.9869);z-index:1;">9</span>
<span class="t" style="left:1022.10px;top:225.94px;font-size:12px;color:#f0f0f0;transform:scaleX(0.9731);z-index:1;">10</span>
<span class="t" style="left:1059.90px;top:225.94px;font-size:12px;color:#f0f0f0;transform:scaleX(1.0426);z-index:1;">11</span>
<span class="t" style="left:1097.70px;top:225.94px;font-size:12px;color:#f0f0f0;transform:scaleX(0.9731);z-index:1;">12</span>
<span class="t" style="left:1135.50px;top:225.94px;font-size:12px;color:#f0f0f0;transform:scaleX(0.9731);z-index:1;">13</span>
<span class="t" style="left:15.20px;top:299.85px;font-size:12.2px;color:#f0f0f0;line-height:1;transform-origin:50% 50%;transform:translate(-50%,-50%) rotate(-90deg);">1</span>
<span class="t" style="left:15.20px;top:337.65px;font-size:12.2px;color:#f0f0f0;line-height:1;transform-origin:50% 50%;transform:translate(-50%,-50%) rotate(-90deg);">2</span>
<span class="t" style="left:15.20px;top:375.45px;font-size:12.2px;color:#f0f0f0;line-height:1;transform-origin:50% 50%;transform:translate(-50%,-50%) rotate(-90deg);">3</span>
<span class="t" style="left:15.20px;top:413.25px;font-size:12.2px;color:#f0f0f0;line-height:1;transform-origin:50% 50%;transform:translate(-50%,-50%) rotate(-90deg);">4</span>
</body>
</html>
